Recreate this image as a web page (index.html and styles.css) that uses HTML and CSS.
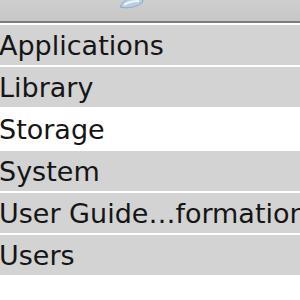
FILE: index.html
```html
<!DOCTYPE html>
<html lang="en">
<head>
  <meta charset="UTF-8" />
  <title>Finder list</title>
  <link rel="stylesheet" href="styles.css">
</head>
<body>
  <div class="toolbar">
    <svg class="tool-icon" width="32" height="14" viewBox="0 0 32 14">
      <path d="M4 10 C8 2 14 0 22 2 L28 0 L26 6 C20 10 12 12 4 10 Z" fill="#b7cfe6" stroke="#8fa9c4" stroke-width="1"/>
      <path d="M8 8 C12 5 17 4 23 4" fill="none" stroke="#eef5fb" stroke-width="2"/>
    </svg>
  </div>
  <ul class="list">
    <li class="row">Applications</li>
    <li class="row">Library</li>
    <li class="row selected">Storage</li>
    <li class="row">System</li>
    <li class="row">User Guide…formation</li>
    <li class="row">Users</li>
  </ul>
</body>
</html>
```
FILE: styles.css
```css
body {
  margin: 0;
  background: #ffffff;
  font-family: "DejaVu Sans", sans-serif;
  overflow: hidden;
}
.toolbar {
  height: 21px;
  background: linear-gradient(#cfcfcf, #c6c6c6);
  border-bottom: 2px solid #7d7d7d;
  position: relative;
}
.tool-icon {
  position: absolute;
  left: 116px;
  top: -3px;
}
.list {
  list-style: none;
  margin: 0;
  padding: 2px 0 0;
  display: flex;
  flex-direction: column;
  gap: 2px;
}
.row {
  height: 40px;
  line-height: 42px;
  background: #d3d3d3;
  color: #151515;
  font-size: 27px;
  text-indent: -1px;
  white-space: nowrap;
}
.row.selected {
  background: #ffffff;
}
```
